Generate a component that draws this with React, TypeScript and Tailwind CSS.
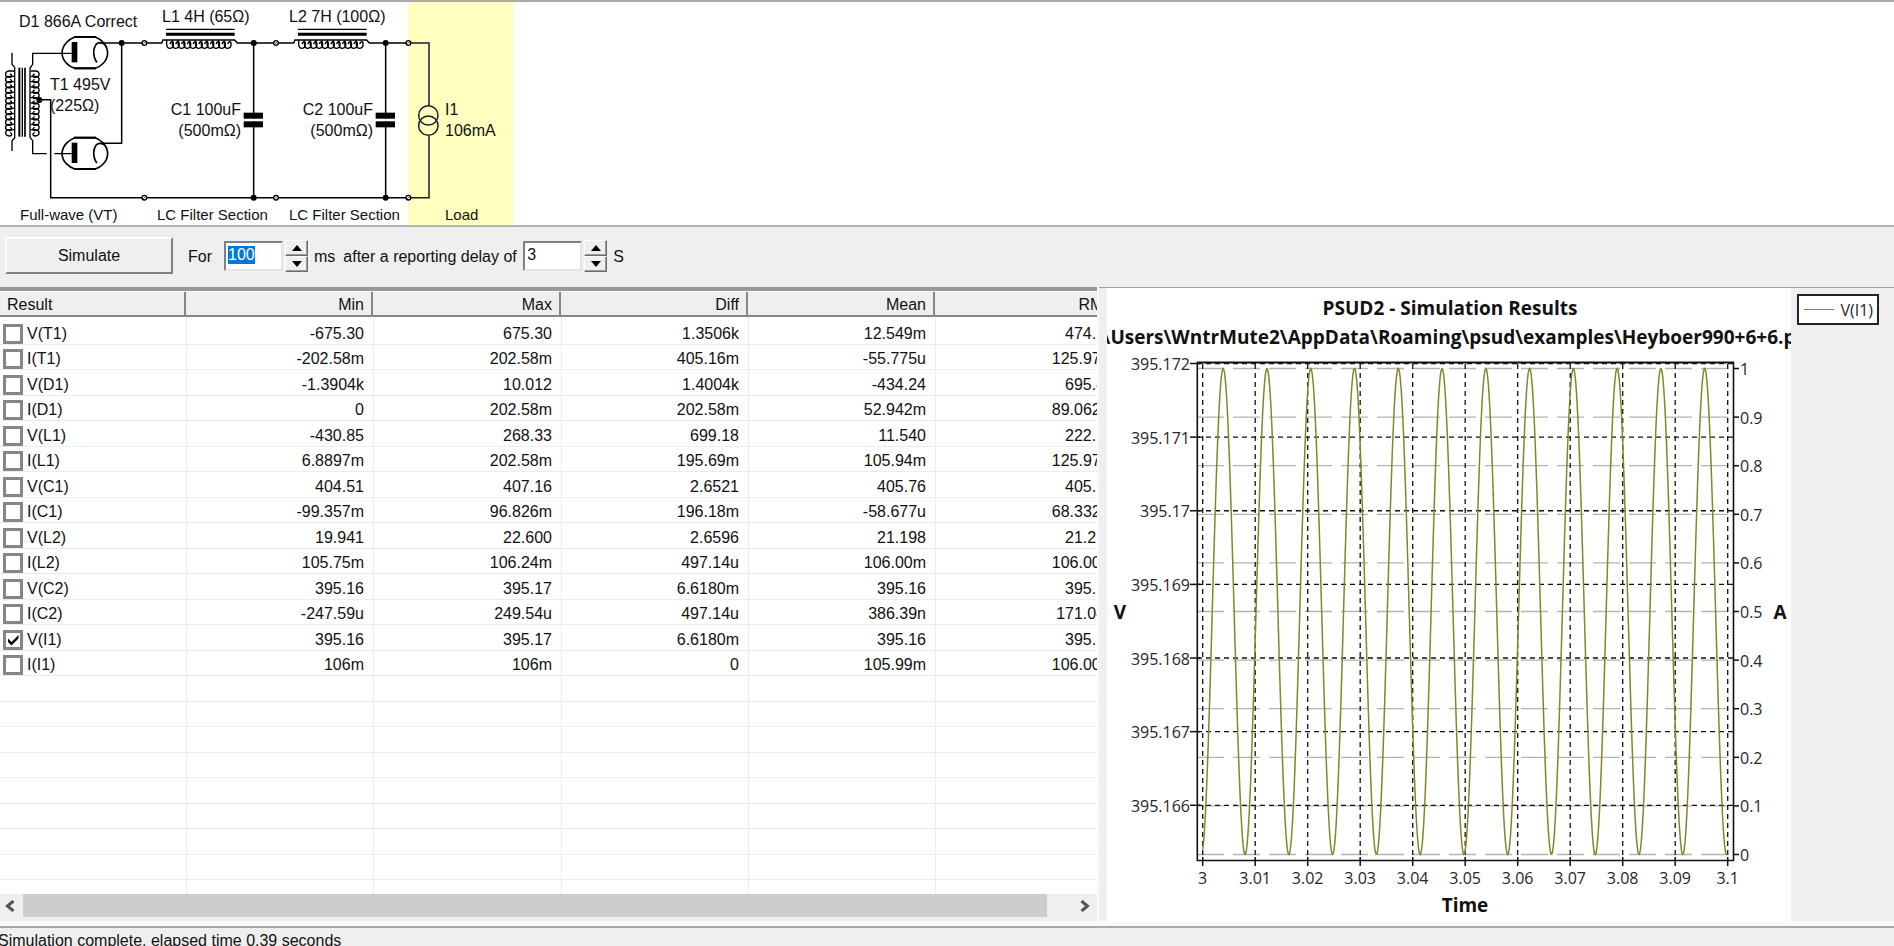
import { useEffect, useRef, useState } from 'react';

type Row = { name: string; values: string[] };

const ROWS: Row[] = [
  { name: 'V(T1)', values: ['-675.30', '675.30', '1.3506k', '12.549m', '474.29'] },
  { name: 'I(T1)', values: ['-202.58m', '202.58m', '405.16m', '-55.775u', '125.97m'] },
  { name: 'V(D1)', values: ['-1.3904k', '10.012', '1.4004k', '-434.24', '695.41'] },
  { name: 'I(D1)', values: ['0', '202.58m', '202.58m', '52.942m', '89.062m'] },
  { name: 'V(L1)', values: ['-430.85', '268.33', '699.18', '11.540', '222.18'] },
  { name: 'I(L1)', values: ['6.8897m', '202.58m', '195.69m', '105.94m', '125.97m'] },
  { name: 'V(C1)', values: ['404.51', '407.16', '2.6521', '405.76', '405.76'] },
  { name: 'I(C1)', values: ['-99.357m', '96.826m', '196.18m', '-58.677u', '68.332m'] },
  { name: 'V(L2)', values: ['19.941', '22.600', '2.6596', '21.198', '21.219'] },
  { name: 'I(L2)', values: ['105.75m', '106.24m', '497.14u', '106.00m', '106.00m'] },
  { name: 'V(C2)', values: ['395.16', '395.17', '6.6180m', '395.16', '395.16'] },
  { name: 'I(C2)', values: ['-247.59u', '249.54u', '497.14u', '386.39n', '171.04u'] },
  { name: 'V(I1)', values: ['395.16', '395.17', '6.6180m', '395.16', '395.16'] },
  { name: 'I(I1)', values: ['106m', '106m', '0', '105.99m', '106.00m'] },
];

const COLUMNS = ['Min', 'Max', 'Diff', 'Mean', 'RMS'];
const EMPTY_ROWS = [0, 1, 2, 3, 4, 5, 6, 7];

/* ---------- circuit drawing, in thirds of a pixel ---------- */

function Coil({ x, y, count, pitch, vertical, flip }: { x: number; y: number; count: number; pitch: number; vertical?: boolean; flip?: boolean }) {
  const loops = Array.from({ length: count }, (_, i) => i);
  return (
    <g fill="none" stroke="#000" strokeWidth="4.2">
      {loops.map((i) =>
        vertical ? (
          <path
            key={i}
            d={
              flip
                ? `M${x} ${y + i * pitch}h14c16 0 14 ${pitch + 3} 0 ${pitch + 3}c-9 0 -10 -7 -2 -10`
                : `M${x} ${y + i * pitch}h-14c-16 0 -14 ${pitch + 3} 0 ${pitch + 3}c9 0 10 -7 2 -10`
            }
          />
        ) : (
          <path key={i} d={`M${x + i * pitch} ${y}v12c0 17 ${pitch + 3} 15 ${pitch + 3} 0c0 -10 -8 -10 -10 -1`} />
        ),
      )}
    </g>
  );
}

function Tube({ y }: { y: number }) {
  return (
    <g fill="none" stroke="#000" strokeWidth="5">
      <path d={`M224 ${y - 48}h62c15 6 36 22 37 48c-1 26 -22 41 -37 46h-62c-15 -5 -37 -20 -38 -46c1 -26 23 -42 38 -48z`} />
      <path d={`M222 ${y - 48}h66M222 ${y + 46}h66`} strokeWidth="6" />
      <rect x="215" y={y - 33} width="17" height="61" fill="#000" stroke="none" />
      <path d={`M300 ${y - 31}c-12 0 -18 12 -19 30c1 12 3 22 10 29`} strokeWidth="5" />
      <path d={`M298 ${y - 31}c12 1 18 6 22 14`} strokeWidth="4" />
    </g>
  );
}

function Terminal({ x, y }: { x: number; y: number }) {
  return (
    <g>
      <circle cx={x} cy={y} r="7" fill="#fff" stroke="#000" strokeWidth="4" />
      <path d={`M${x - 4} ${y + 4}l8 -8`} stroke="#000" strokeWidth="2" />
    </g>
  );
}

function FilterSection({ dx }: { dx: number }) {
  return (
    <g transform={`translate(${dx} 0)`}>
      <path d="M433 129H485l4 -9H704l8 9H828M433 593H828M761 129V593" fill="none" stroke="#000" strokeWidth="4.5" />
      <path d="M498 88H704" stroke="#000" strokeWidth="3.5" />
      <path d="M498 103H704" stroke="#000" strokeWidth="9" />
      <Coil x={500} y={121} count={11} pitch={17.3} />
      <rect x="733" y="355" width="56" height="10" fill="#fff" />
      <rect x="731" y="338" width="58" height="18" fill="#000" />
      <rect x="731" y="364" width="58" height="18" fill="#000" />
      <circle cx="761" cy="129" r="9" />
      <circle cx="761" cy="593" r="9" />
    </g>
  );
}

function Schematic() {
  return (
    <svg viewBox="0 2 514 223" className="block h-[223px] w-[514px]" role="img" aria-label="Power supply circuit">
      <rect x="408" y="2" width="105" height="223" fill="#ffffbe" />
      <g transform="scale(0.333333)">
        <g fill="none" stroke="#000" strokeWidth="4">
          <path d="M36 158V193L44 202V414L36 422V453" />
          <path d="M183 160H98V193L90 204V412L98 422V461H140M163 461H215M183 160H215" />
          <path d="M120 299H152V593H433" strokeWidth="4.5" />
          <path d="M300 129H433M300 430H365V129" strokeWidth="4.5" />
          <path d="M58 203V410" strokeWidth="6" />
          <path d="M67 203V410" strokeWidth="4" />
          <path d="M75 203V410" strokeWidth="5" />
        </g>
        <Coil x={42} y={213} count={12} pitch={16} vertical />
        <Coil x={92} y={213} count={12} pitch={16} vertical flip />
        <circle cx="118" cy="300" r="9" />
        <Tube y={159} />
        <Tube y={461} />
        <circle cx="365" cy="129" r="9" />
        <FilterSection dx={0} />
        <FilterSection dx={396} />
        <g fill="none" stroke="#1c1c30" strokeWidth="4.5">
          <path d="M1225 129H1287V317M1287 407V593H1225" />
          <circle cx="1285" cy="346" r="29" />
          <circle cx="1285" cy="377" r="29" />
        </g>
        {[433, 828, 1225].map((x) => (
          <g key={x}>
            <Terminal x={x} y={129} />
            <Terminal x={x} y={593} />
          </g>
        ))}
      </g>
      <g fontSize="16" fill="#111">
        <text x="19" y="27">D1 866A Correct</text>
        <text x="50" y="90">T1 495V</text>
        <text x="50" y="111">(225Ω)</text>
        <text x="162" y="22">L1 4H (65Ω)</text>
        <text x="289" y="22">L2 7H (100Ω)</text>
        <text x="241" y="115" textAnchor="end">C1 100uF</text>
        <text x="241" y="136" textAnchor="end">(500mΩ)</text>
        <text x="373" y="115" textAnchor="end">C2 100uF</text>
        <text x="373" y="136" textAnchor="end">(500mΩ)</text>
        <text x="445" y="115">I1</text>
        <text x="445" y="136">106mA</text>
      </g>
      <g fontSize="15" fill="#111">
        <text x="20" y="220">Full-wave (VT)</text>
        <text x="157" y="220">LC Filter Section</text>
        <text x="289" y="220">LC Filter Section</text>
        <text x="445" y="220">Load</text>
      </g>
    </svg>
  );
}

/* ---------- result chart ---------- */

const X0 = 1202.7;
const X_STEP = 52.5;
const PERIOD = 43.77;
const TROUGH = 1201.3;
const TOP = 368.5;
const BOTTOM = 854.5;

const X_LABELS = ['3', '3.01', '3.02', '3.03', '3.04', '3.05', '3.06', '3.07', '3.08', '3.09', '3.1'];
const Y_LABELS = ['395.172', '395.171', '395.17', '395.169', '395.168', '395.167', '395.166'];
const A_LABELS = ['1', '0.9', '0.8', '0.7', '0.6', '0.5', '0.4', '0.3', '0.2', '0.1', '0'];

function wave(): string {
  const points: string[] = [];
  for (let x = X0; x <= X0 + 10 * X_STEP - 0.5; x += 0.5) {
    const y = (TOP + BOTTOM) / 2 + ((BOTTOM - TOP) / 2) * Math.cos(((x - TROUGH) / PERIOD) * 2 * Math.PI);
    points.push(`${x.toFixed(1)},${y.toFixed(1)}`);
  }
  return points.join(' ');
}

function Chart() {
  return (
    <svg viewBox="1107 288 684 633" className="block h-[633px] w-[684px] shrink-0 bg-white font-['Open_Sans','Noto_Sans',sans-serif]" role="img" aria-label="Simulation results">
      <g fontSize="19" fontWeight="700" fill="#111" textAnchor="middle">
        <text x="1450" y="315">PSUD2 - Simulation Results</text>
        <text x="1449" y="344">{'\\Users\\WntrMute2\\AppData\\Roaming\\psud\\examples\\Heyboer990+6+6.p'}</text>
        <text x="1120" y="619">V</text>
        <text x="1780" y="619">A</text>
        <text x="1465" y="912">Time</text>
      </g>
      <g stroke="#b4b4b4" strokeWidth="1.3" strokeDasharray="27 9">
        {A_LABELS.map((label, i) => (
          <path key={label} d={`M1197 ${TOP + i * 48.6}H1728`} />
        ))}
      </g>
      <g stroke="#111" strokeWidth="1.3" strokeDasharray="5 4">
        {X_LABELS.map((label, i) => (
          <path key={label} d={`M${X0 + i * X_STEP} 364V860`} />
        ))}
        {Y_LABELS.map((label, i) => (
          <path key={label} d={`M1197 ${363.5 + i * 73.63}H1733`} />
        ))}
      </g>
      <polyline points={wave()} fill="none" stroke="#85862a" strokeWidth="1.5" />
      <g fill="none" stroke="#111">
        <path d="M1197.3 362V860.5H1733.5V362.3" strokeWidth="1.6" />
        <path d="M1197 362.5H1734" strokeWidth="2" />
        <g strokeWidth="1.5">
          {X_LABELS.map((label, i) => (
            <path key={label} d={`M${X0 + i * X_STEP} 857V866`} />
          ))}
          {Y_LABELS.map((label, i) => (
            <path key={label} d={`M1190 ${363.5 + i * 73.63}H1200`} />
          ))}
          {A_LABELS.map((label, i) => (
            <path key={label} d={`M1733 ${TOP + i * 48.6}H1739`} />
          ))}
        </g>
      </g>
      <g fontSize="16" fill="#26262c">
        {X_LABELS.map((label, i) => (
          <text key={label} x={X0 + i * X_STEP} y="884" textAnchor="middle">{label}</text>
        ))}
        {Y_LABELS.map((label, i) => (
          <text key={label} x="1190" y={370 + i * 73.63} textAnchor="end">{label}</text>
        ))}
        {A_LABELS.map((label, i) => (
          <text key={label} x="1740" y={375 + i * 48.6}>{label}</text>
        ))}
      </g>
    </svg>
  );
}

/* ---------- controls ---------- */

function SpinField({ id, value, onChange, step, inputRef }: { id: string; value: string; onChange: (v: string) => void; step: number; inputRef?: React.RefObject<HTMLInputElement | null> }) {
  const bump = (by: number) => onChange(String(Math.max(0, Number(value) + by)));
  const arrow = 'flex h-4 w-[23px] items-center justify-center border border-t-white border-l-white border-r-[#6e6e6e] border-b-[#6e6e6e] bg-[#efefef] shadow-[inset_-1px_-1px_0_#9a9a9a]';
  return (
    <span className="flex items-center gap-0.5">
      <input
        id={id}
        ref={inputRef}
        value={value}
        onChange={(e) => onChange(e.target.value)}
        className="h-[30px] w-[59px] border-2 border-t-[#808080] border-l-[#808080] border-r-[#e4e4e4] border-b-[#e4e4e4] bg-white pb-0.5 pl-0.5 leading-5 outline-none selection:bg-[#0078d7] selection:text-white"
      />
      <span className="flex flex-col">
        <button type="button" aria-label="Increase" className={arrow} onClick={() => bump(step)}>
          <svg viewBox="0 0 10 6" className="h-1.5 w-2.5"><path d="M5 0L10 6H0z" /></svg>
        </button>
        <button type="button" aria-label="Decrease" className={arrow} onClick={() => bump(-step)}>
          <svg viewBox="0 0 10 6" className="h-1.5 w-2.5"><path d="M5 6L0 0h10z" /></svg>
        </button>
      </span>
    </span>
  );
}

function ResultTable() {
  const [checked, setChecked] = useState<string[]>(['V(I1)']);
  const toggle = (name: string) =>
    setChecked((list) => (list.includes(name) ? list.filter((n) => n !== name) : [...list, name]));
  return (
    <table className="w-[1124px] table-fixed border-separate border-spacing-0 leading-5">
      <colgroup>
        <col className="w-[187px]" />
        <col className="w-[187px]" />
        <col className="w-[188px]" />
        <col className="w-[187px]" />
        <col className="w-[187px]" />
        <col className="w-[188px]" />
      </colgroup>
      <thead>
        <tr className="h-[26px] bg-[#efefef]">
          {['Result', ...COLUMNS].map((title, i) => (
            <th key={title} className={`border-t border-b-2 border-t-white border-b-[#868686] p-0 pr-px font-normal ${i === 0 ? 'text-left' : 'text-right'}`}>
              <div className={`h-[23px] border-r-2 border-[#868686] pt-[3px] ${i === 0 ? 'pl-[7px]' : 'pr-[7px]'}`}>{title}</div>
            </th>
          ))}
        </tr>
      </thead>
      <tbody>
        {ROWS.map((row) => (
          <tr key={row.name} className="h-[26px] align-bottom first:h-[28px] even:h-[25px]">
            <td className="border-r border-b border-[#ececec] p-0">
              <label className="flex items-center gap-1 pl-[3px]">
                <span className="relative flex">
                  <input
                    type="checkbox"
                    checked={checked.includes(row.name)}
                    onChange={() => toggle(row.name)}
                    className="peer h-5 w-5 appearance-none border-3 border-[#868686] bg-white"
                  />
                  <svg viewBox="0 0 20 20" className="pointer-events-none absolute inset-0 hidden h-5 w-5 peer-checked:block">
                    <path d="M5 8.5L8.5 12L15.5 5V8.5L8.5 15.5L5 12z" />
                  </svg>
                </span>
                {row.name}
              </label>
            </td>
            {row.values.map((value, i) => (
              <td key={i} className="border-r border-b border-[#ececec] py-0 pr-[9px] pl-0 text-right">{value}</td>
            ))}
          </tr>
        ))}
        {EMPTY_ROWS.map((n) => (
          <tr key={n} className="h-[26px] even:h-[25px]">
            {['Result', ...COLUMNS].map((c) => (
              <td key={c} className="border-r border-b border-[#ececec] p-0" />
            ))}
          </tr>
        ))}
        <tr className="h-[26px]">
          {['Result', ...COLUMNS].map((c) => (
            <td key={c} className="border-r border-[#ececec] p-0" />
          ))}
        </tr>
      </tbody>
    </table>
  );
}

export default function App() {
  const [duration, setDuration] = useState('100');
  const [delay, setDelay] = useState('3');
  const durationRef = useRef<HTMLInputElement>(null);

  useEffect(() => {
    durationRef.current?.focus();
    durationRef.current?.select();
  }, []);

  return (
    <div className="flex h-screen flex-col overflow-hidden bg-[#efefef] font-['Liberation_Sans',Arial,sans-serif] text-[16px] text-[#111]">
      <section className="shrink-0 border-y-2 border-t-[#a9a9a9] border-b-[#b4b4b4] bg-white">
        <Schematic />
      </section>

      <form className="flex h-[60px] shrink-0 items-center pr-2 pb-[3px] pl-[5px]" onSubmit={(e) => e.preventDefault()}>
        <button
          type="submit"
          className="h-[37px] w-[168px] border-2 border-t-white border-l-white border-r-[#808080] border-b-[#808080] bg-[#efefef]"
        >
          Simulate
        </button>
        <label htmlFor="duration" className="pt-0.5 pl-[15px]">For</label>
        <span className="px-3 pr-1.5">
          <SpinField id="duration" value={duration} onChange={setDuration} step={10} inputRef={durationRef} />
        </span>
        <span className="pt-0.5">ms</span>
        <label htmlFor="delay" className="w-[188px] pt-0.5 pl-2 whitespace-nowrap">after a reporting delay of</label>
        <span className="pr-1.5">
          <SpinField id="delay" value={delay} onChange={setDelay} step={1} />
        </span>
        <span className="pt-0.5">S</span>
      </form>

      <main className="flex min-h-0 flex-1 bg-[#fafafa] pb-[5px]">
        <section className="flex min-w-0 flex-1 flex-col border-t-4 border-[#989898] bg-white">
          <div className="min-h-0 flex-1 overflow-hidden">
            <ResultTable />
          </div>
          <div className="flex h-[27px] shrink-0 bg-[#efefef] pb-1">
            <button type="button" aria-label="Scroll left" className="flex w-[23px] items-center justify-center pr-1">
              <svg viewBox="0 0 10 12" className="h-3 w-2.5"><path d="M8.5 1L2.5 6L8.5 11" fill="none" stroke="#555" strokeWidth="3" /></svg>
            </button>
            <div className="flex-1 bg-[#cdcdcd]" />
            <button type="button" aria-label="Scroll right" className="ml-[26px] flex w-6 items-center justify-center">
              <svg viewBox="0 0 10 12" className="h-3 w-2.5"><path d="M1.5 1L7.5 6L1.5 11" fill="none" stroke="#555" strokeWidth="3" /></svg>
            </button>
          </div>
        </section>
        <div className="ml-0.5 w-2 shrink-0 border-t border-[#a0a0a0] bg-[#efefef]" />
        <section className="flex shrink-0 border-t border-[#a0a0a0] bg-[#efefef]">
          <Chart />
          <div className="w-[103px] pt-1.5 pl-1.5">
            <div className="flex h-[31px] w-[82px] items-center justify-between border-2 border-[#222] bg-white pr-1 pl-[5px] font-['Open_Sans','Noto_Sans',sans-serif] text-[#26262c]">
              <span className="h-px w-[30px] bg-[#85862a]" />
              V(I1)
            </div>
          </div>
        </section>
      </main>

      <footer className="h-5 shrink-0 overflow-hidden border-t-2 border-[#a9a9a9] pt-[3px] leading-5">
        <p className="-ml-0.5">Simulation complete, elapsed time 0.39 seconds</p>
      </footer>
    </div>
  );
}
